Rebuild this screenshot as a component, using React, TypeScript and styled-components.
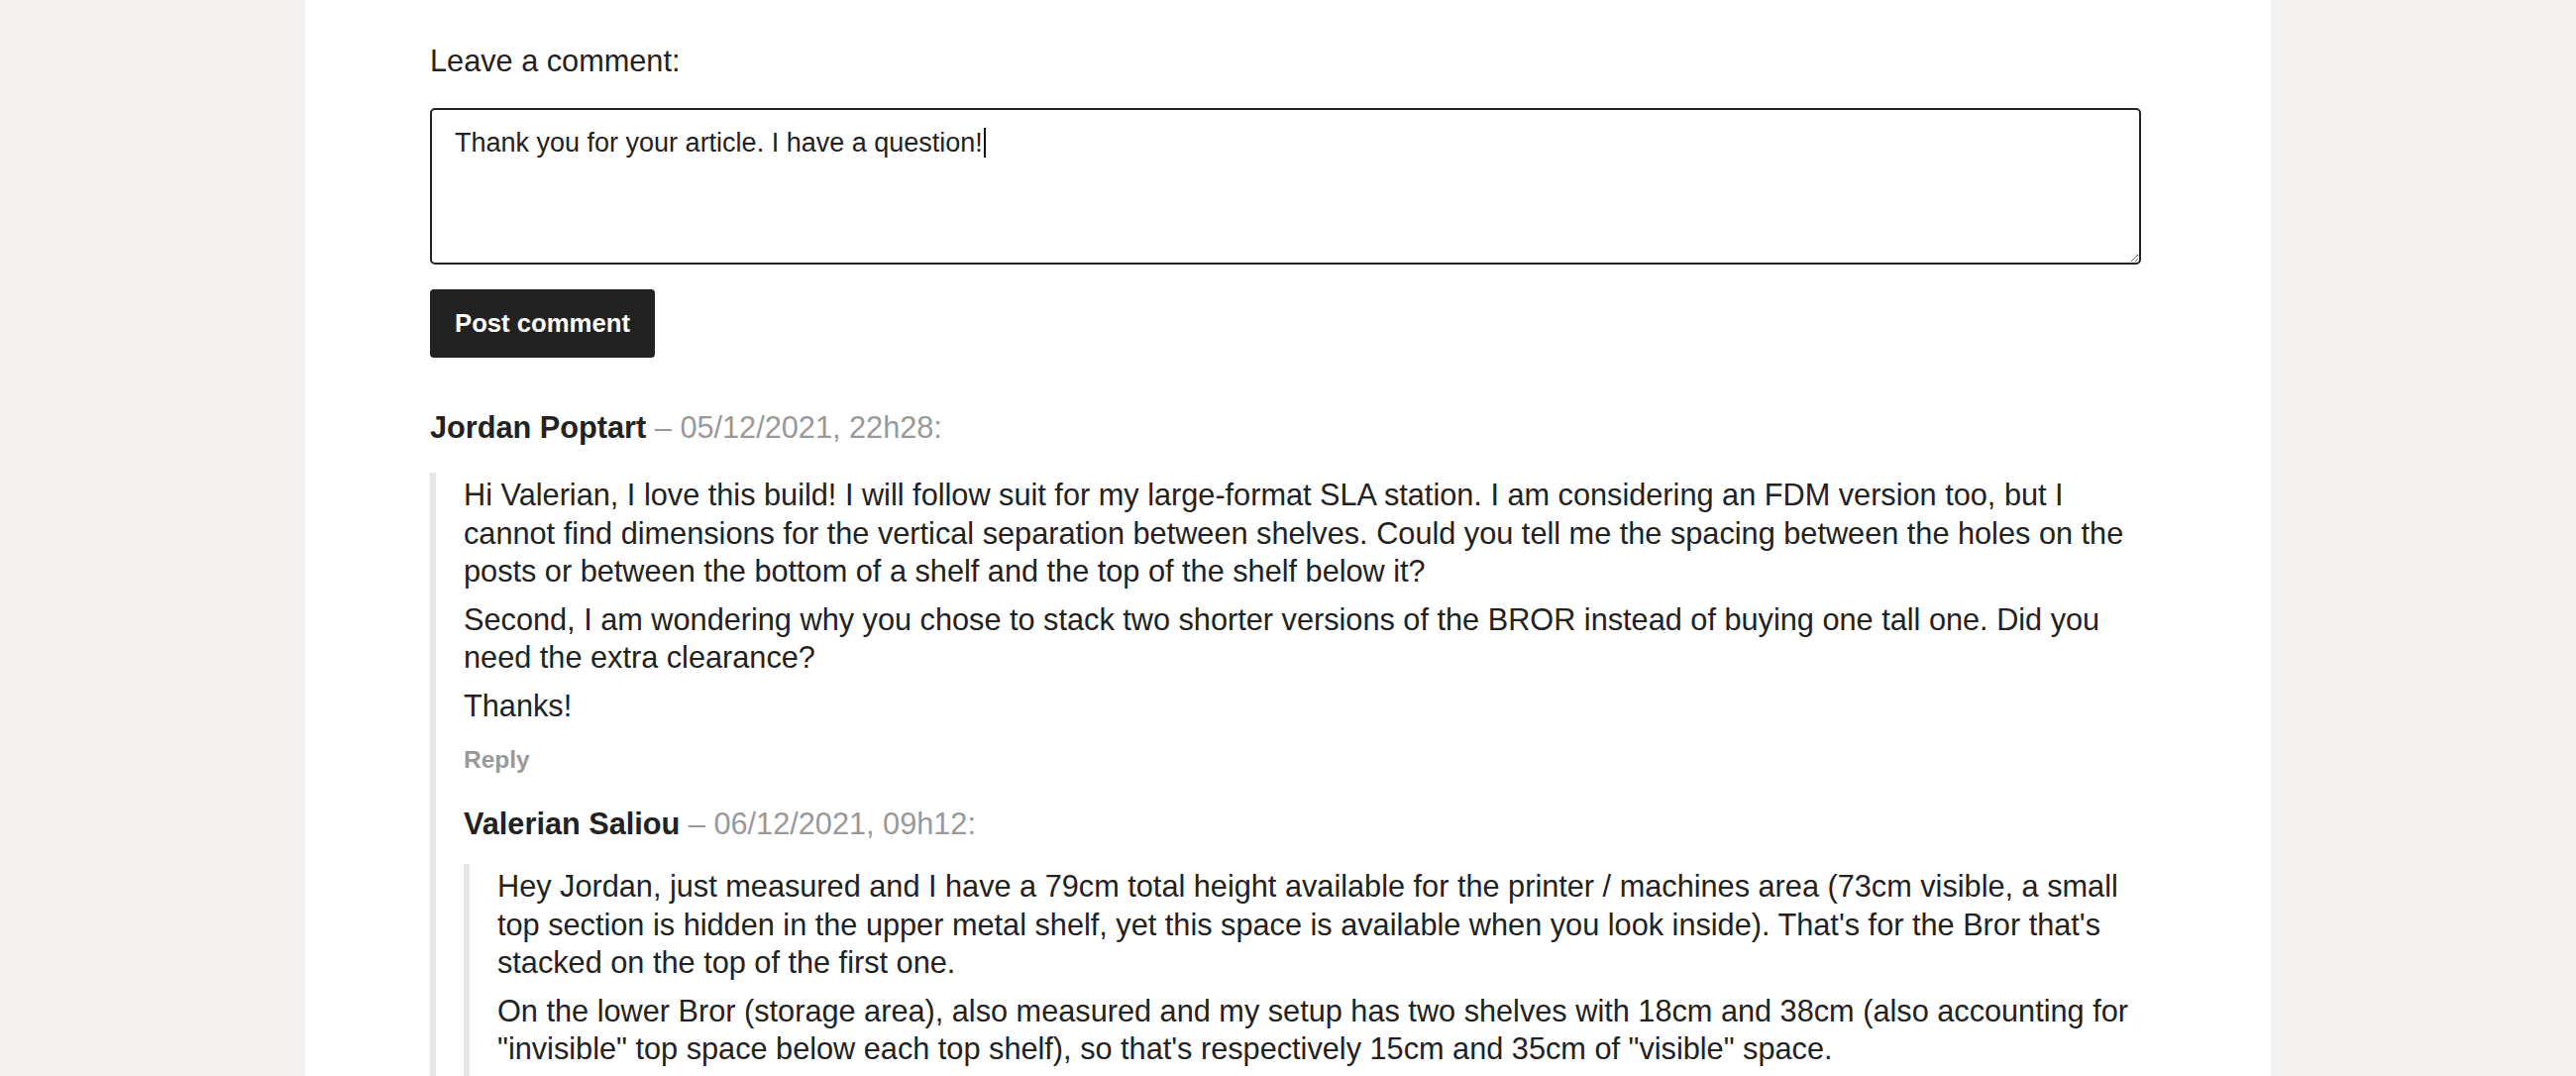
import React, { useEffect, useRef, useState } from "react";
import styled, { createGlobalStyle } from "styled-components";

const GlobalStyle = createGlobalStyle`
  html, body {
    margin: 0;
    padding: 0;
    background: #f3f2f0;
  }
  body {
    font-family: "Liberation Sans", Arial, Helvetica, sans-serif;
    font-size: 30.7px;
    line-height: 38.5px;
    color: #222;
  }
  * { box-sizing: border-box; }
`;

const Card = styled.main`
  width: 1984px;
  min-height: 100vh;
  margin: 0 auto;
  background: #fff;
  padding: 43px 131px 60px 126px;
`;

const FormLabel = styled.label`
  display: block;
  margin: 0 0 27px;
`;

const Field = styled.div`
  position: relative;
`;

const TextArea = styled.textarea`
  display: block;
  width: 100%;
  height: 158px;
  margin: 0;
  padding: 16px 22px 16px 23px;
  border: 2px solid #222;
  border-radius: 5px;
  font-family: "Liberation Sans", Arial, Helvetica, sans-serif;
  font-size: 27px;
  line-height: 34px;
  color: #222;
  caret-color: transparent;
  background: #fff;
  &:focus { outline: none; }
`;

const Caret = styled.span`
  position: absolute;
  top: 20px;
  width: 2px;
  height: 30px;
  background: #111;
  pointer-events: none;
`;

const PostButton = styled.button`
  display: block;
  margin: 25px 0 0;
  padding: 18px 25px;
  border: none;
  border-radius: 4px;
  background: #222;
  color: #fff;
  font-family: "Liberation Sans", Arial, Helvetica, sans-serif;
  font-size: 25.7px;
  font-weight: 700;
  line-height: 33px;
  cursor: pointer;
`;

const Thread = styled.section`
  margin-top: 52px;
`;

const CommentBox = styled.article<{ $nested?: boolean }>`
  margin-top: ${(p) => (p.$nested ? "28px" : "0")};
`;

const CommentHeader = styled.div`
  line-height: 38.7px;
`;

const Author = styled.strong`
  font-weight: 700;
  color: #222;
`;

const Meta = styled.span`
  color: #999;
`;

const Quote = styled.blockquote<{ $nested?: boolean }>`
  margin: ${(p) => (p.$nested ? "21px" : "26px")} 0 0;
  padding: 4px 0 0 28px;
  border-left: 6px solid #e6e6e6;
`;

const Para = styled.p`
  margin: 0 0 10px;
`;

const ReplyLink = styled.a`
  display: inline-block;
  margin-top: 8px;
  font-size: 24.5px;
  line-height: 33px;
  font-weight: 700;
  color: #999;
  text-decoration: none;
  cursor: pointer;
`;

type CommentData = {
  author: string;
  date: string;
  paragraphs: string[];
  replies?: CommentData[];
};

const comments: CommentData[] = [
  {
    author: "Jordan Poptart",
    date: "05/12/2021, 22h28",
    paragraphs: [
      "Hi Valerian, I love this build! I will follow suit for my large-format SLA station. I am considering an FDM version too, but I cannot find dimensions for the vertical separation between shelves. Could you tell me the spacing between the holes on the posts or between the bottom of a shelf and the top of the shelf below it?",
      "Second, I am wondering why you chose to stack two shorter versions of the BROR instead of buying one tall one. Did you need the extra clearance?",
      "Thanks!",
    ],
    replies: [
      {
        author: "Valerian Saliou",
        date: "06/12/2021, 09h12",
        paragraphs: [
          "Hey Jordan, just measured and I have a 79cm total height available for the printer / machines area (73cm visible, a small top section is hidden in the upper metal shelf, yet this space is available when you look inside). That's for the Bror that's stacked on the top of the first one.",
          "On the lower Bror (storage area), also measured and my setup has two shelves with 18cm and 38cm (also accounting for \"invisible\" top space below each top shelf), so that's respectively 15cm and 35cm of \"visible\" space.",
        ],
      },
    ],
  },
];

function Comment({ data, nested }: { data: CommentData; nested?: boolean }) {
  return (
    <CommentBox $nested={nested}>
      <CommentHeader>
        <Author>{data.author}</Author>
        <Meta> – {data.date}:</Meta>
      </CommentHeader>
      <Quote $nested={nested}>
        {data.paragraphs.map((t, i) => (
          <Para key={i}>{t}</Para>
        ))}
        <ReplyLink>Reply</ReplyLink>
        {data.replies?.map((r, i) => (
          <Comment key={i} data={r} nested />
        ))}
      </Quote>
    </CommentBox>
  );
}

const draft = "Thank you for your article. I have a question!";

export default function App() {
  const ref = useRef<HTMLTextAreaElement>(null);
  const [caretX, setCaretX] = useState<number | null>(null);
  useEffect(() => {
    const el = ref.current;
    if (el) {
      el.focus();
      const n = el.value.length;
      el.setSelectionRange(n, n);
      const ctx = document.createElement("canvas").getContext("2d");
      if (ctx) {
        ctx.font = '27px "Liberation Sans", Arial, sans-serif';
        setCaretX(2 + 23 + ctx.measureText(el.value).width + 1);
      }
    }
  }, []);
  return (
    <>
      <GlobalStyle />
      <Card>
        <FormLabel htmlFor="comment">Leave a comment:</FormLabel>
        <Field>
          <TextArea id="comment" ref={ref} defaultValue={draft} />
          {caretX !== null && <Caret aria-hidden style={{ left: caretX }} />}
        </Field>
        <PostButton type="button">Post comment</PostButton>
        <Thread>
          {comments.map((c, i) => (
            <Comment key={i} data={c} />
          ))}
        </Thread>
      </Card>
    </>
  );
}
